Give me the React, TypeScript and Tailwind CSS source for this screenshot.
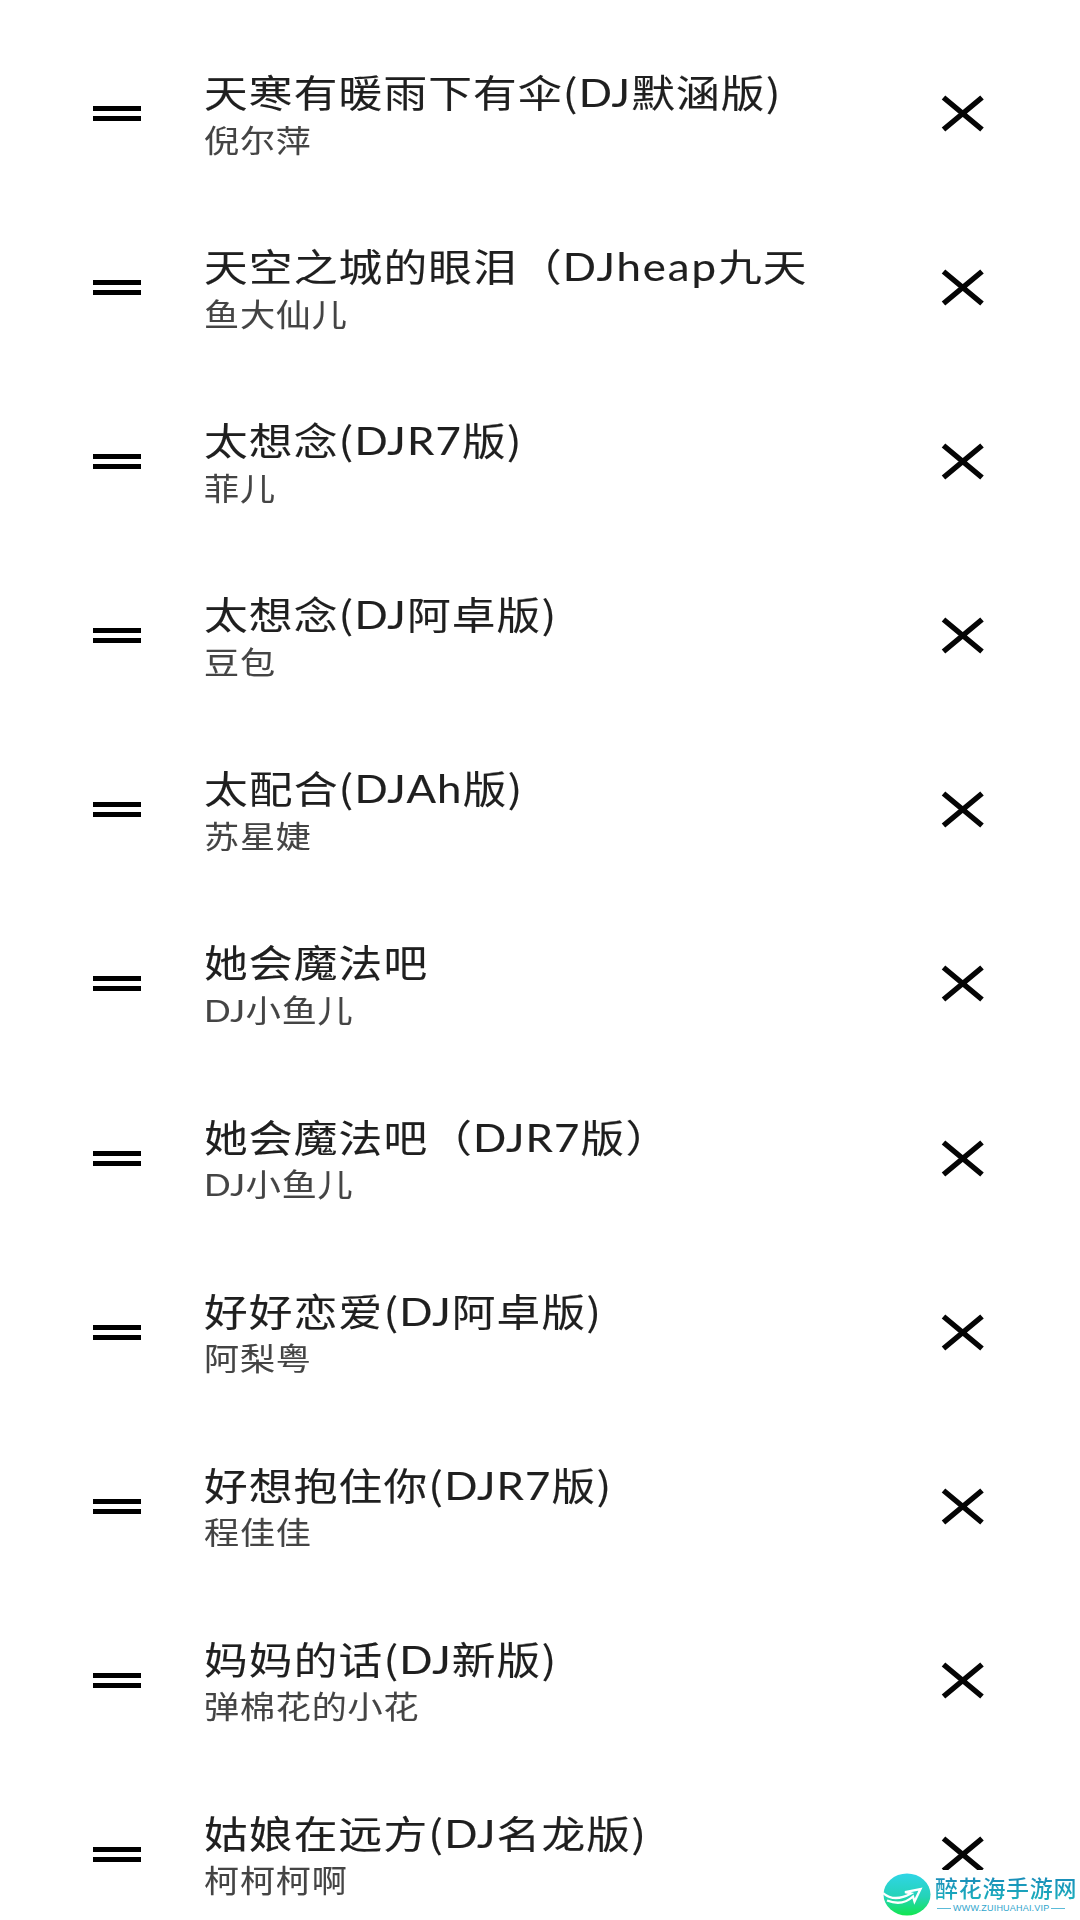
import React from "react";

const songs = [
  { title: "天寒有暖雨下有伞(DJ默涵版)", artist: "倪尔萍" },
  { title: "天空之城的眼泪（DJheap九天", artist: "鱼大仙儿" },
  { title: "太想念(DJR7版)", artist: "菲儿" },
  { title: "太想念(DJ阿卓版)", artist: "豆包" },
  { title: "太配合(DJAh版)", artist: "苏星婕" },
  { title: "她会魔法吧", artist: "DJ小鱼儿" },
  { title: "她会魔法吧（DJR7版）", artist: "DJ小鱼儿" },
  { title: "好好恋爱(DJ阿卓版)", artist: "阿梨粤" },
  { title: "好想抱住你(DJR7版)", artist: "程佳佳" },
  { title: "妈妈的话(DJ新版)", artist: "弹棉花的小花" },
  { title: "姑娘在远方(DJ名龙版)", artist: "柯柯柯啊" },
];

function Mixed({ text }: { text: string }) {
  return (
    <>
      {text.split(/([A-Za-z0-9]+)/).map((part, i) =>
        i % 2 ? (
          <span key={i} className={part.length > 4 ? "font-['Lato'] tracking-[1.7px]" : "font-['Lato']"}>
            {part}
          </span>
        ) : (
          part
        ),
      )}
    </>
  );
}

function SongRow({ title, artist }: { title: string; artist: string }) {
  return (
    <li className="flex h-[174.1px] shrink-0 items-start">
      <div className="mt-[79px] ml-[93px] flex h-[15px] w-12 flex-col justify-between">
        <div className="h-[5px] bg-black" />
        <div className="h-[5px] bg-black" />
      </div>
      <div className="mt-[40px] ml-[63px] flex w-[640px] flex-col whitespace-nowrap">
        <div className="h-[47.5px] origin-left scale-x-[1.15] text-[38px] leading-[48px] tracking-[1px] text-[#1f1f1f] [-webkit-text-stroke:0.12px_#1f1f1f]">
          <Mixed text={title} />
        </div>
        <div className="h-12 origin-left scale-x-[1.15] text-[30.5px] leading-[48px] tracking-[0.7px] text-[#444444] [-webkit-text-stroke:0.1px_#444444]">
          <Mixed text={artist} />
        </div>
      </div>
      <svg className="mt-[68px] ml-[97px] h-[37px] w-[44px]" viewBox="0 0 44 37" fill="none" stroke="#050505" strokeWidth="5.5">
        <path d="M2.5 2.5 41 34.5M41 2.5 2.5 34.5" />
      </svg>
    </li>
  );
}

function Watermark() {
  return (
    <div className="absolute right-0 bottom-0 flex h-[50px] w-[200px] bg-white">
      <svg className="mt-[3px] ml-[3px] h-[43px] w-[48px] shrink-0" viewBox="0 0 48 43">
        <defs>
          <linearGradient id="disc" x1="0" y1="0" x2="0" y2="1">
            <stop offset="0" stopColor="#2fd5e6" />
            <stop offset="0.55" stopColor="#25d3b8" />
            <stop offset="1" stopColor="#12e64f" />
          </linearGradient>
        </defs>
        <ellipse cx="24" cy="21.5" rx="23.5" ry="21" fill="url(#disc)" />
        <path
          d="M0 20C8 27 18 26 28 20.5L22 19.2 37.5 16 31.5 28.5 30 23.5C22 31 13 31 4 27.5"
          fill="none"
          stroke="white"
          strokeWidth="2.3"
          strokeLinejoin="miter"
        />
      </svg>
      <div className="mt-[3px] ml-[4px] flex w-[142px] flex-col">
        <div className="h-[29px] bg-linear-to-b from-[#1a86b8] to-[#1cb3bd] bg-clip-text font-['Noto_Sans_CJK_SC'] text-[23px] leading-[29px] font-medium tracking-[0.7px] whitespace-nowrap text-transparent">
          醉花海手游网
        </div>
        <div className="mt-[1px] flex h-[10px] items-center gap-[2px] font-['Liberation_Sans'] text-[9px] leading-[10px] tracking-[0.2px] text-[#2fa5cc]">
          <span className="ml-[2px] h-px w-[14px] shrink-0 bg-[#5cbbd8]" />
          <span>WWW.ZUIHUAHAI.VIP</span>
          <span className="h-px w-[14px] shrink-0 bg-[#5cbbd8]" />
        </div>
      </div>
    </div>
  );
}

export default function App() {
  return (
    <main className="relative h-[1920px] w-[1080px] overflow-hidden bg-white font-['Noto_Sans_CJK_SC',sans-serif]">
      <ul className="flex flex-col pt-[27px]">
        {songs.map((song) => (
          <SongRow key={song.title} {...song} />
        ))}
      </ul>
      <Watermark />
    </main>
  );
}
